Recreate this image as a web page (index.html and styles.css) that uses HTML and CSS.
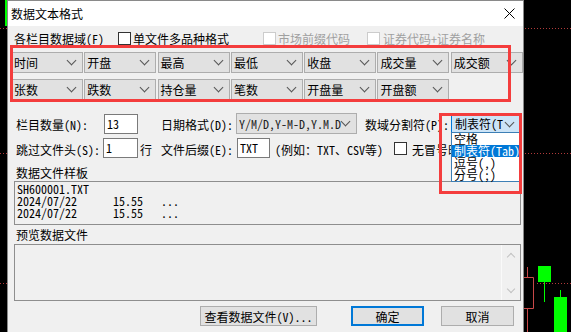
FILE: index.html
```html
<!DOCTYPE html>
<html>
	<head>
		<meta charset="UTF-8">
		<title>数据文本格式</title>
		<link rel="stylesheet" href="styles.css">
	</head>
	<body>
		<div class="screen">
			<svg class="chart" width="7" height="332" viewBox="0 0 7 332">
				<rect x="5" y="0" width="2" height="26" fill="#00ff00"/>
				<line class="dots" x1="0" y1="28.5" x2="7" y2="28.5"/>
				<line class="dots" x1="0" y1="153.5" x2="7" y2="153.5"/>
				<line class="dots" x1="0" y1="283.5" x2="7" y2="283.5"/>
			</svg>

			<div class="dialog">
				<div class="titlebar">
					<span>数据文本格式</span>
					<svg class="close" width="11" height="11" viewBox="0 0 11 11">
						<path d="M0.5 0.5 L10.5 10.5 M10.5 0.5 L0.5 10.5" stroke="#000" stroke-width="1"/>
					</svg>
				</div>

				<div class="row-head">
					<span class="head-label">各栏目数据域(F)</span>
					<span class="check"></span><span class="head-multi">单文件多品种格式</span>
					<span class="check off"></span><span class="muted head-prefix">市场前缀代码</span>
					<span class="check off check-name"></span><span class="muted">证券代码+证券名称</span>
				</div>

				<div class="fields">
					<div class="combo">时间</div>
					<div class="combo">开盘</div>
					<div class="combo">最高</div>
					<div class="combo">最低</div>
					<div class="combo">收盘</div>
					<div class="combo">成交量</div>
					<div class="combo">成交额</div>
					<div class="combo">张数</div>
					<div class="combo">跌数</div>
					<div class="combo">持仓量</div>
					<div class="combo">笔数</div>
					<div class="combo">开盘量</div>
					<div class="combo">开盘额</div>
				</div>

				<div class="row-opt row-count">
					<span class="lbl w88">栏目数量(N):</span>
					<span class="input w34">13</span>
					<span class="lbl w75 ml23">日期格式(D):</span>
					<div class="combo date"><span class="clip">Y/M/D,Y-M-D,Y.M.D</span></div>
					<span class="lbl w86 ml8">数域分割符(P):</span>
					<div class="combo sep">制表符(T</div>
				</div>

				<div class="row-opt row-skip">
					<span class="lbl w87">跳过文件头(S):</span>
					<span class="input w35">1</span>
					<span class="lbl w12 ml2">行</span>
					<span class="lbl w76 ml9">文件后缀(E):</span>
					<span class="input w33">TXT</span>
					<span class="lbl w114 ml5">(例如：TXT、CSV等)</span>
					<span class="check ml5"></span>
					<span class="lbl ml3">无冒号时间</span>
				</div>

				<div class="caption">数据文件样板</div>
				<pre class="sample">SH600001.TXT
2024/07/22      15.55   ...
2024/07/22      15.55   ...</pre>

				<div class="caption caption-preview">预览数据文件</div>
				<div class="preview">
					<div class="preview-body"></div>
					<div class="scrollbar">
						<span class="arrow up"></span>
						<span class="arrow down"></span>
					</div>
				</div>

				<div class="buttons">
					<button class="btn btn-view">查看数据文件(V)...</button>
					<button class="btn btn-ok">确定</button>
					<button class="btn btn-cancel">取消</button>
				</div>

				<!-- 下拉列表 -->
				<ul class="droplist">
					<li>空格</li>
					<li class="now">制表符(Tab)</li>
					<li>逗号(,)</li>
					<li>分号(;)</li>
				</ul>

				<!-- 红框标注 -->
				<div class="mark mark-fields"></div>
				<div class="mark mark-sep"></div>
			</div>

			<svg class="chart" width="47" height="332" viewBox="0 0 47 332">
				<line class="dots" x1="1" y1="28.5" x2="47" y2="28.5"/>
				<line class="dots" x1="1" y1="153.5" x2="47" y2="153.5"/>
				<line class="dots" x1="13" y1="283.5" x2="47" y2="283.5"/>
				<line x1="3.5" y1="267" x2="3.5" y2="277" stroke="#c84848"/>
				<line x1="3.5" y1="309" x2="3.5" y2="332" stroke="#c84848"/>
				<path d="M0 277.5 H9.5 V308.5 H0" fill="none" stroke="#c84848"/>
				<rect x="20" y="282" width="1" height="20" fill="#00ff00"/>
				<rect x="14" y="266" width="13" height="16" fill="#00ff00"/>
				<rect x="36" y="290" width="1" height="7" fill="#00ff00"/>
				<rect x="30" y="297" width="13" height="35" fill="#00ff00"/>
			</svg>
		</div>
	</body>
</html>
```

FILE: styles.css
```css
*{margin: 0;padding: 0;box-sizing: border-box;list-style: none;}
body{
	background: #000;
	font-family: "Noto Sans Mono CJK SC", "Noto Sans CJK SC", sans-serif;
	font-size: 12px;
	color: #000;
	overflow: hidden;
}
.screen{
	display: flex;
	width: 571px;
	height: 332px;
}
.chart{
	display: block;
	flex: none;
}
.dots{
	stroke: #b03a3a;
	stroke-width: 1;
	stroke-dasharray: 1 2;
}
.dialog{
	position: relative;
	flex: none;
	width: 517px;
	height: 332px;
	background: #f0f0f0;
	border: 1px solid #8a8a8a;
	border-bottom: none;
	overflow: hidden;
}
.titlebar{
	height: 25px;
	background: #fff;
	display: flex;
	align-items: center;
	justify-content: space-between;
	padding: 0 8px 0 3px;
}
.close{
	display: block;
}

/* 第一行 */
.row-head{
	display: flex;
	align-items: center;
	height: 18px;
	margin-top: 3px;
	padding-left: 6px;
	white-space: nowrap;
}
.head-label{
	width: 104px;
}
.head-multi{
	width: 130px;
}
.head-prefix{
	width: 89px;
}
.check{
	width: 13px;
	height: 13px;
	border: 1px solid #333;
	background: #fff;
	margin-right: 2px;
	flex: none;
}
.check.off{
	border-color: #cccccc;
}
.check-name{
	margin-right: 3px;
}
.muted{
	color: #a0a0a0;
}

/* 栏目下拉 */
.fields{
	display: grid;
	grid-template-columns: repeat(7, 72px);
	grid-auto-rows: 21px;
	column-gap: 1.3px;
	row-gap: 6px;
	margin-top: 5px;
	padding-left: 3px;
}
.combo{
	position: relative;
	background: #e1e1e1;
	border: 1px solid #adadad;
	padding-left: 2px;
	line-height: 19px;
	white-space: nowrap;
	overflow: hidden;
}
.combo::after{
	content: "";
	position: absolute;
	right: 7px;
	top: 4px;
	width: 6px;
	height: 6px;
	border-right: 1px solid #555;
	border-bottom: 1px solid #555;
	transform: rotate(45deg);
}

/* 选项行 */
.row-opt{
	display: flex;
	align-items: center;
	padding-left: 8px;
	white-space: nowrap;
}
.row-count{
	height: 21px;
	margin-top: 13px;
}
.row-skip{
	height: 20px;
	margin-top: 4px;
}
.lbl{
	padding-top: 2px;
	flex: none;
}
.input{
	height: 20px;
	background: #fff;
	border: 1px solid #7a7a7a;
	padding-left: 2px;
	line-height: 18px;
	flex: none;
}
.combo.date{
	width: 121px;
	height: 21px;
	flex: none;
	padding-left: 2px;
	color: #222;
}
.combo.date .clip{
	display: block;
	width: 103px;
	overflow: hidden;
}
.combo.sep{
	width: 70px;
	height: 18px;
	line-height: 16px;
	flex: none;
	background: #cce4f7;
	border-color: #0078d7;
	padding-left: 3px;
}
.combo.sep::after{
	top: 3px;
}
.w12{width: 12px;}
.w33{width: 33px;}
.w34{width: 34px;}
.w35{width: 35px;}
.w75{width: 75px;}
.w76{width: 76px;}
.w86{width: 86px;}
.w87{width: 87px;}
.w88{width: 88px;}
.w114{width: 114px;}
.ml2{margin-left: 2px;}
.ml3{margin-left: 3px;}
.ml5{margin-left: 5px;}
.ml8{margin-left: 8px;}
.ml9{margin-left: 9px;}
.ml23{margin-left: 23px;}

/* 样板和预览 */
.caption{
	height: 16px;
	line-height: 16px;
	margin-top: 7px;
	padding-left: 8px;
}
.caption-preview{
	margin-top: 2px;
}
.sample{
	margin-left: 6px;
	width: 507px;
	height: 44px;
	border: 1px solid #8e8e8e;
	padding: 1px 0 0 2px;
	font-family: inherit;
	font-size: 12px;
	line-height: 12px;
	overflow: hidden;
}
.preview{
	display: flex;
	margin: 1px 0 0 6px;
	width: 507px;
	height: 57px;
	border: 1px solid #8e8e8e;
}
.preview-body{
	flex: 1;
}
.scrollbar{
	width: 19px;
	border-left: 1px solid #fafafa;
	display: flex;
	flex-direction: column;
	justify-content: space-between;
	align-items: center;
	padding: 9px 0 8px;
}
.arrow{
	width: 6px;
	height: 6px;
	border-left: 1px solid #c2c2c2;
	border-top: 1px solid #c2c2c2;
	transform: rotate(45deg);
}
.arrow.down{
	transform: rotate(225deg);
}

/* 按钮 */
.buttons{
	display: flex;
	margin-top: 5px;
	padding-left: 192px;
}
.btn{
	height: 20px;
	background: #e1e1e1;
	border: 1px solid #adadad;
	font-family: inherit;
	font-size: 12px;
	color: #000;
	text-align: center;
}
.btn-view{
	width: 117px;
}
.btn-ok{
	width: 73px;
	margin-left: 34px;
	border: 2px solid #0078d7;
}
.btn-cancel{
	width: 73px;
	margin-left: 17px;
}

/* 下拉列表 */
.droplist{
	position: absolute;
	left: 443px;
	top: 131px;
	width: 70px;
	height: 50px;
	background: #fff;
	border: 1px solid #3d7fb5;
}
.droplist li{
	height: 12px;
	line-height: 12px;
	padding-left: 2px;
	white-space: nowrap;
}
.droplist .now{
	background: #0078d7;
	color: #fff;
}

/* 红框 */
.mark{
	position: absolute;
	border: 3px solid #f43d3d;
}
.mark-fields{
	left: 2px;
	top: 44px;
	width: 501px;
	height: 57px;
}
.mark-sep{
	left: 431px;
	top: 112px;
	width: 83px;
	height: 81px;
}
```
